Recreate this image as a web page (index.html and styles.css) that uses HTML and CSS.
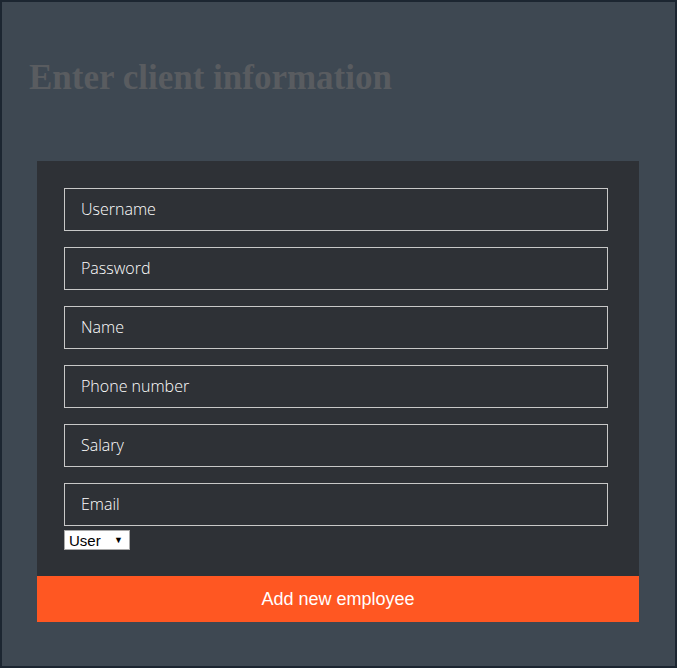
FILE: index.html
```html
<!DOCTYPE html>
<html>
<head>
<meta charset="utf-8">
<link rel="stylesheet" href="styles.css">
</head>
<body>
<div class="page">
  <h1 class="title">Enter client information</h1>
  <form class="card">
    <div class="fields">
      <input class="field" type="text" placeholder="Username">
      <input class="field" type="password" placeholder="Password">
      <input class="field" type="text" placeholder="Name">
      <input class="field" type="text" placeholder="Phone number">
      <input class="field" type="text" placeholder="Salary">
      <input class="field" type="text" placeholder="Email">
      <div class="select"><span>User</span><span class="arrow">▼</span></div>
    </div>
    <button class="submit" type="button">Add new employee</button>
  </form>
</div>
</body>
</html>
```
FILE: styles.css
```css
html, body { margin: 0; padding: 0; }
body { background: #3e4852; }
.page {
  box-sizing: border-box;
  width: 677px;
  height: 668px;
  border: 2px solid #1c2631;
  background: #3e4852;
  padding-top: 1px;
}
.title {
  font-family: "Liberation Serif", serif;
  font-weight: bold;
  font-size: 35px;
  line-height: 41px;
  color: #595c60;
  margin: 54px 0 0 27px;
}
.card {
  margin: 63px 0 0 35px;
  width: 602px;
  background: #2e3136;
}
.fields {
  padding: 27px 31px 26px 27px;
  display: flex;
  flex-direction: column;
}
.field {
  box-sizing: border-box;
  width: 544px;
  height: 43px;
  margin: 0 0 16px 0;
  background: transparent;
  border: 1px solid #c8c8c8;
  padding: 0 16px 1px 16px;
  font-family: "Open Sans", sans-serif;
  font-weight: 300;
  font-size: 16px;
  color: #fff;
  outline: none;
}
.field:last-of-type { margin-bottom: 4px; }
.field::placeholder { color: #fff; opacity: 1; }
.select {
  box-sizing: border-box;
  width: 66px;
  height: 20px;
  background: #fff;
  border: 1px solid #a9a9a9;
  display: flex;
  align-items: center;
  justify-content: space-between;
  padding: 0 6px 0 4px;
  font-family: "Liberation Sans", sans-serif;
  font-size: 15px;
  color: #000;
}
.arrow { font-size: 9px; }
.submit {
  display: block;
  width: 602px;
  height: 46px;
  border: none;
  background: #ff5722;
  color: #fff;
  font-family: "Liberation Sans", sans-serif;
  font-size: 18px;
  padding: 0;
}
```
